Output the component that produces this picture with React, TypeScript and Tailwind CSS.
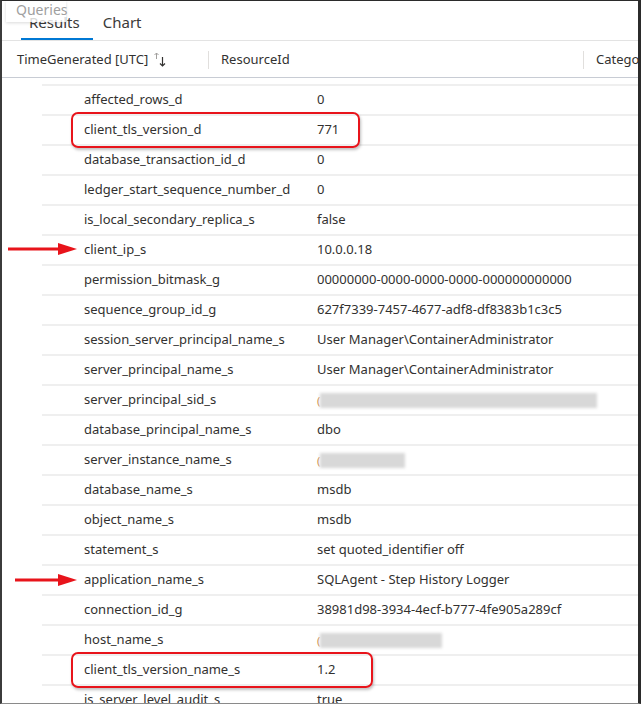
import React from 'react';

type Row = {
  name: string;
  value?: string;
  blur?: number;
};

const rows: Row[] = [
  { name: 'affected_rows_d', value: '0' },
  { name: 'client_tls_version_d', value: '771' },
  { name: 'database_transaction_id_d', value: '0' },
  { name: 'ledger_start_sequence_number_d', value: '0' },
  { name: 'is_local_secondary_replica_s', value: 'false' },
  { name: 'client_ip_s', value: '10.0.0.18' },
  { name: 'permission_bitmask_g', value: '00000000-0000-0000-0000-000000000000' },
  { name: 'sequence_group_id_g', value: '627f7339-7457-4677-adf8-df8383b1c3c5' },
  { name: 'session_server_principal_name_s', value: 'User Manager\\ContainerAdministrator' },
  { name: 'server_principal_name_s', value: 'User Manager\\ContainerAdministrator' },
  { name: 'server_principal_sid_s', blur: 281 },
  { name: 'database_principal_name_s', value: 'dbo' },
  { name: 'server_instance_name_s', blur: 89 },
  { name: 'database_name_s', value: 'msdb' },
  { name: 'object_name_s', value: 'msdb' },
  { name: 'statement_s', value: 'set quoted_identifier off' },
  { name: 'application_name_s', value: 'SQLAgent - Step History Logger' },
  { name: 'connection_id_g', value: '38981d98-3934-4ecf-b777-4fe905a289cf' },
  { name: 'host_name_s', blur: 126 },
  { name: 'client_tls_version_name_s', value: '1.2' },
  { name: 'is_server_level_audit_s', value: 'true' },
];

function RedArrow({ width }: { width: number }) {
  return (
    <svg width={width} height="14" viewBox={`0 0 ${width} 14`}>
      <line x1="0" y1="7" x2={width - 14} y2="7" stroke="#e8141b" strokeWidth="3" />
      <polygon points={`${width - 19},1 ${width},7 ${width - 19},13`} fill="#e8141b" />
    </svg>
  );
}

function SortIcon() {
  return (
    <svg width="14" height="16" viewBox="0 0 14 16" className="ml-[5px]">
      <path d="M3.5 7V1M1.5 3L3.5 1L5.5 3" stroke="#a19f9d" strokeWidth="1" fill="none" />
      <path d="M9.5 5V14M7 11.5L9.5 14L12 11.5" stroke="#323130" strokeWidth="1.2" fill="none" />
    </svg>
  );
}

function DataRow({ row }: { row: Row }) {
  return (
    <div className="flex h-[30px] items-center border-b-2 border-[#efefef] ml-[40px] shrink-0">
      <div className="w-[275px] pl-[42px] shrink-0 whitespace-nowrap">{row.name}</div>
      <div className="whitespace-nowrap">
        {row.value}
        {row.blur && (
          <div className="flex items-center">
            <span className="text-[#c9884a] text-[11px] leading-none">(</span>
            <span className="block h-[15px] bg-[#d8d8d8] blur-[1.5px]" style={{ width: row.blur - 4 }} />
          </div>
        )}
      </div>
    </div>
  );
}

export default function App() {
  return (
    <div
      className="relative w-[641px] h-[704px] overflow-hidden bg-white border-l-2 border-l-[#3b3b3b] border-r-[3px] border-r-[#2b2b2b] border-t border-t-[#2b2b2b] border-b border-b-[#8a8a8a] text-[#323130] text-[13px]"
      style={{ fontFamily: '"Noto Sans", "Open Sans", sans-serif' }}
    >
      <div className="flex h-[40px] border-b border-[#e3e3e3] text-[15px] pl-[18px]">
        <div className="relative flex items-center pt-[4px] px-[9px] h-full">
          <span className="text-[#3b3a39]">Results</span>
          <span className="absolute left-[1px] right-[-4px] bottom-[0px] h-[2px] bg-[#0078d4]" />
        </div>
        <div className="flex items-center pt-[4px] px-[14px] h-full text-[#3b3a39]">Chart</div>
      </div>

      <div className="flex h-[37px] items-center pt-[2px] border-b border-[#c8ccd4] whitespace-nowrap">
        <div className="flex items-center w-[206px] pl-[15px] shrink-0">
          <span>TimeGenerated [UTC]</span>
          <SortIcon />
        </div>
        <div className="w-px h-[18px] bg-[#e1dfdd] shrink-0" />
        <div className="w-[374px] pl-[12px] shrink-0">ResourceId</div>
        <div className="w-px h-[18px] bg-[#e1dfdd] shrink-0" />
        <div className="pl-[12px]">Category</div>
      </div>

      <div className="flex flex-col overflow-hidden">
        <div className="flex h-[30px] -mt-[22px] items-center border-b-2 border-[#efefef] ml-[40px] shrink-0">
          <div className="w-[275px] pl-[42px] shrink-0 whitespace-nowrap">response_rows_jg</div>
          <div>0</div>
        </div>
        {rows.map((row) => (
          <DataRow key={row.name} row={row} />
        ))}
      </div>

      <div className="absolute left-[4px] top-0 w-[60px] h-[21px] bg-white/80 shadow-[0_1px_3px_rgba(0,0,0,0.15)] text-[14px] text-[#a0a0a0] leading-[17px] pl-[10px]">
        Queries
      </div>

      <div className="absolute left-[69px] top-[111px] w-[289px] h-[36px] rounded-[7px] border-2 border-[#e8141b] shadow-[1px_2px_3px_rgba(0,0,0,0.25)]" />
      <div className="absolute left-[69px] top-[651px] w-[302px] h-[36px] rounded-[7px] border-2 border-[#e8141b] shadow-[1px_2px_3px_rgba(0,0,0,0.25)]" />

      <div className="absolute left-[6px] top-[241px]">
        <RedArrow width={69} />
      </div>
      <div className="absolute left-[13px] top-[572px]">
        <RedArrow width={62} />
      </div>
    </div>
  );
}
